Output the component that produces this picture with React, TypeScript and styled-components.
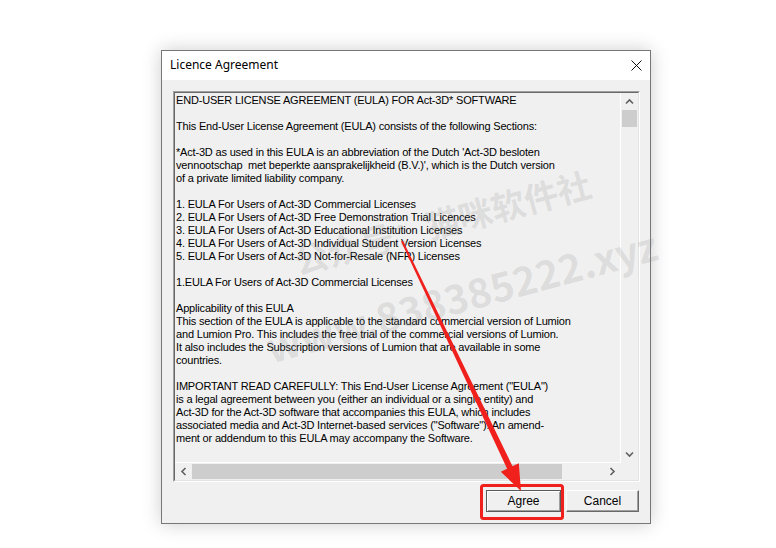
import React from "react";
import styled, { createGlobalStyle } from "styled-components";

const eulaLines = [
  "END-USER LICENSE AGREEMENT (EULA) FOR Act-3D* SOFTWARE",
  "",
  "This End-User License Agreement (EULA) consists of the following Sections:",
  "",
  "*Act-3D as used in this EULA is an abbreviation of the Dutch 'Act-3D besloten",
  "vennootschap  met beperkte aansprakelijkheid (B.V.)', which is the Dutch version",
  "of a private limited liability company.",
  "",
  "1. EULA For Users of Act-3D Commercial Licenses",
  "2. EULA For Users of Act-3D Free Demonstration Trial Licences",
  "3. EULA For Users of Act-3D Educational Institution Licenses",
  "4. EULA For Users of Act-3D Individual Student Version Licenses",
  "5. EULA For Users of Act-3D Not-for-Resale (NFR) Licenses",
  "",
  "1.EULA For Users of Act-3D Commercial Licenses",
  "",
  "Applicability of this EULA",
  "This section of the EULA is applicable to the standard commercial version of Lumion",
  "and Lumion Pro. This includes the free trial of the commercial versions of Lumion.",
  "It also includes the Subscription versions of Lumion that are available in some",
  "countries.",
  "",
  'IMPORTANT READ CAREFULLY: This End-User License Agreement ("EULA")',
  "is a legal agreement between you (either an individual or a single entity) and",
  "Act-3D for the Act-3D software that accompanies this EULA, which includes",
  'associated media and Act-3D Internet-based services ("Software"). An amend-',
  "ment or addendum to this EULA may accompany the Software.",
];

const Chevron = ({ dir }: { dir: "up" | "down" | "left" | "right" }) => {
  const rot = { up: 0, right: 90, down: 180, left: 270 }[dir];
  return (
    <svg width="9" height="9" viewBox="0 0 9 9" style={{ transform: `rotate(${rot}deg)` }}>
      <path d="M1 6.5 L4.5 3 L8 6.5" fill="none" stroke="#606060" strokeWidth="1.6" />
    </svg>
  );
};

const App = () => {
  return (
    <Page>
      <GlobalStyle />
      <Dialog>
        <TitleBar>
          <Title>Licence Agreement</Title>
          <CloseButton>
            <svg width="11" height="11" viewBox="0 0 11 11">
              <path d="M0.5 0.5 L10.5 10.5 M10.5 0.5 L0.5 10.5" stroke="#111" strokeWidth="1" />
            </svg>
          </CloseButton>
        </TitleBar>

        <Body>
          <TextBox>
            <TextBoxInner>
              <TextArea>
                {eulaLines.map((line, i) => (
                  <Line key={i}>{line}</Line>
                ))}
              </TextArea>

              <VScroll>
                <ScrollArrow>
                  <Chevron dir="up" />
                </ScrollArrow>
                <VTrack>
                  <VThumb />
                </VTrack>
                <ScrollArrow>
                  <Chevron dir="down" />
                </ScrollArrow>
              </VScroll>

              <HScroll>
                <ScrollArrow>
                  <Chevron dir="left" />
                </ScrollArrow>
                <HTrack>
                  <HThumb $size={370} />
                </HTrack>
                <ScrollArrow>
                  <Chevron dir="right" />
                </ScrollArrow>
              </HScroll>

              <Corner />
            </TextBoxInner>
          </TextBox>

          <ButtonRow>
            <Button $default $width={75}>Agree</Button>
            <Button $width={73}>Cancel</Button>
          </ButtonRow>
        </Body>
      </Dialog>

      <Overlay width="776" height="548" viewBox="0 0 776 548">
        <g
          fill="rgba(120,120,120,0.16)"
          fontFamily="'Noto Sans CJK SC', 'Liberation Sans', sans-serif"
          fontWeight="700"
          textAnchor="middle"
        >
          <text x="443" y="236" fontSize="34" transform="rotate(-15 443 225)">
            公众号：猫咪软件社
          </text>
          <text x="462" y="312" fontSize="40" transform="rotate(-15 462 298)">
            www.838385222.xyz
          </text>
        </g>
        <polygon
          points="402.9,240.6 512.5,466.2 518.8,463.2 521,491 500.8,471.8 507.1,468.8 401.1,241.4"
          fill="#f0201c"
        />
        <rect x="481.5" y="485.5" width="81" height="33" rx="2" fill="none" stroke="#f0201c" strokeWidth="3" />
      </Overlay>
    </Page>
  );
};

/**
 * styles
 */

const GlobalStyle = createGlobalStyle`
  html, body {
    margin: 0;
    padding: 0;
    background: #fff;
  }
`;

const Page = styled.div`
  position: relative;
  width: 776px;
  height: 548px;
  box-sizing: border-box;
  padding: 50px 0 0 161px;
  overflow: hidden;
`;

const Dialog = styled.div`
  width: 490px;
  height: 474px;
  box-sizing: border-box;
  display: flex;
  flex-direction: column;
  background: #f0f0f0;
  border: 1px solid #777;
  box-shadow: 0 0 18px rgba(0, 0, 0, 0.2);
`;

const TitleBar = styled.div`
  height: 29px;
  display: flex;
  align-items: center;
  justify-content: space-between;
  background: #fff;
  padding-left: 8px;
`;

const Title = styled.span`
  font-family: "Noto Sans", "Open Sans", sans-serif;
  font-size: 12px;
  color: #000;
  margin-top: -2px;
`;

const CloseButton = styled.div`
  width: 28px;
  height: 29px;
  display: flex;
  align-items: center;
  justify-content: center;
`;

const Body = styled.div`
  flex: 1;
  display: flex;
  flex-direction: column;
  padding: 11px 10px 0 11px;
`;

const TextBox = styled.div`
  height: 391px;
  box-sizing: border-box;
  border: 1px solid;
  border-color: #a0a0a0 #fff #fff #a0a0a0;
`;

const TextBoxInner = styled.div`
  height: 100%;
  box-sizing: border-box;
  border: 1px solid;
  border-color: #696969 #e3e3e3 #e3e3e3 #696969;
  display: grid;
  grid-template-columns: 1fr 17px;
  grid-template-rows: 1fr 17px;
  background: #f0f0f0;
`;

const TextArea = styled.div`
  overflow: hidden;
  padding: 1px 0 0 1px;
  font-family: "Liberation Sans", Arial, sans-serif;
  font-size: 11px;
  line-height: 13px;
  letter-spacing: -0.18px;
  color: #000;
`;

const Line = styled.div`
  height: 13px;
  white-space: pre;
`;

const VScroll = styled.div`
  display: flex;
  flex-direction: column;
  border-left: 1px solid #fff;
  margin-left: -1px;
`;

const HScroll = styled.div`
  display: flex;
  border-top: 1px solid #fff;
  margin-top: -1px;
`;

const ScrollArrow = styled.div`
  width: 17px;
  height: 17px;
  flex: none;
  display: flex;
  align-items: center;
  justify-content: center;
`;

const VTrack = styled.div`
  flex: 1;
`;

const VThumb = styled.div`
  height: 17px;
  margin: 0 1px;
  background: #cdcdcd;
`;

const HTrack = styled.div`
  flex: 1;
  display: flex;
`;

const HThumb = styled.div<{ $size: number }>`
  width: ${(p) => p.$size}px;
  margin: 1px 0;
  background: #cdcdcd;
`;

const Corner = styled.div`
  background: #f0f0f0;
`;

const ButtonRow = styled.div`
  display: flex;
  justify-content: flex-end;
  gap: 5px;
  margin-top: 8px;
  padding-right: 1px;
`;

const Button = styled.div<{ $default?: boolean; $width: number }>`
  width: ${(p) => p.$width}px;
  height: 22px;
  box-sizing: border-box;
  display: flex;
  align-items: center;
  justify-content: center;
  font-family: "Liberation Sans", Arial, sans-serif;
  font-size: 12px;
  color: #000;
  background: #f0f0f0;
  border: 1px solid;
  border-color: ${(p) => (p.$default ? "#5a5a5a" : "#fff #696969 #696969 #fff")};
  box-shadow: ${(p) =>
    p.$default
      ? "inset 1px 1px #fff, inset -1px -1px #a0a0a0"
      : "inset -1px -1px #a0a0a0"};
`;

const Overlay = styled.svg`
  position: absolute;
  top: 0;
  left: 0;
  pointer-events: none;
`;

export default App;
